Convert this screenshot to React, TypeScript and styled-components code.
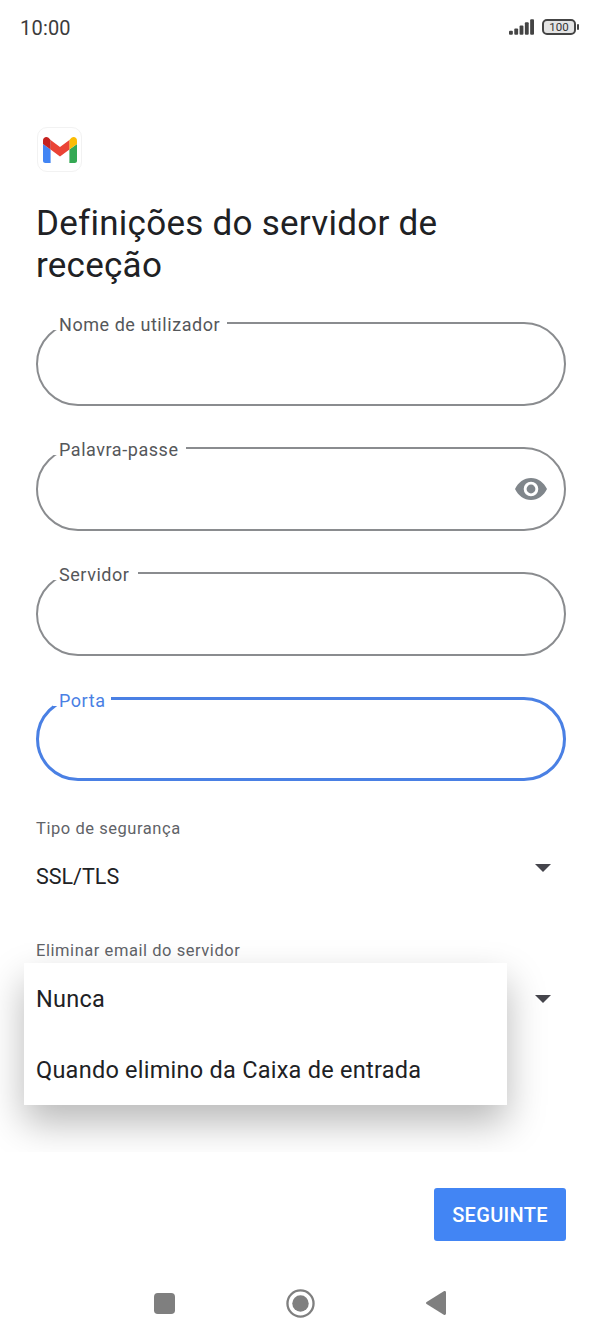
import React from "react";
import styled, {createGlobalStyle} from "styled-components";

const GlobalStyle = createGlobalStyle`
	html, body {
		margin: 0;
		padding: 0;
		background: #fff;
		font-family: Roboto, "Liberation Sans", sans-serif;
	}
	* {
		box-sizing: border-box;
	}
`;

const FIELDS = [
	{label: "Nome de utilizador", notch: 174},
	{label: "Palavra-passe", notch: 133, eye: true},
	{label: "Servidor", notch: 85},
	{label: "Porta", notch: 58, active: true},
];

const GmailLogo = () => (
	<svg width="34" height="26" viewBox="0 0 34 26">
		<path d="M2.3 26H7.6V12.6L0 7V23.700C0 25 1 26 2.300 26Z" fill="#4285f4" />
		<path d="M26.400 26H31.700C33 26 34 25 34 23.700V7L26.400 12.600Z" fill="#34a853" />
		<path d="M26.400 2.900V12.600L34 7V3.400C34 .6 30.800 -1 28.500 .8Z" fill="#fbbc04" />
		<path d="M7.600 12.600V2.900L17 9.900L26.400 2.900V12.600L17 19.600Z" fill="#ea4335" />
		<path d="M0 3.400V7L7.600 12.600V2.900L5.500 .8C3.200 -1 0 .6 0 3.400Z" fill="#c5221f" />
	</svg>
);

const EyeIcon = () => (
	<svg width="32" height="22" viewBox="0 0 32 22">
		<path
			fillRule="evenodd"
			d="M16 0C9 0 3.100 4.500 0 11C3.100 17.500 9 22 16 22C23 22 28.900 17.500 32 11C28.900 4.500 23 0 16 0ZM16 18.300A7.300 7.300 0 1 1 16 3.700A7.300 7.300 0 0 1 16 18.300Z"
			fill="#80868b"
		/>
		<circle cx="16" cy="11" r="4.400" fill="#80868b" />
	</svg>
);

const Caret = () => (
	<svg width="16" height="8" viewBox="0 0 16 8">
		<path d="M0 0H16L8 8Z" fill="#45454c" />
	</svg>
);

export default function App() {
	return (
		<Screen>
			<GlobalStyle />
			<StatusBar>
				<Clock>10:00</Clock>
				<StatusIcons>
					<svg width="25" height="16" viewBox="0 0 26 16">
						<rect x="0" y="12" width="4" height="4" rx="1" fill="#444" />
						<rect x="5.500" y="9.500" width="4" height="6.500" rx="1" fill="#444" />
						<rect x="11" y="6.500" width="4" height="9.500" rx="1" fill="#444" />
						<rect x="16.500" y="3" width="4" height="13" rx="1" fill="#444" />
						<rect x="22" y="0" width="4" height="16" rx="1" fill="#444" />
					</svg>
					<Battery>
						<BatteryBody>100</BatteryBody>
						<BatteryTip />
					</Battery>
				</StatusIcons>
			</StatusBar>

			<Content>
				<LogoBox>
					<GmailLogo />
				</LogoBox>
				<Title>Definições do servidor de receção</Title>

				<FieldList>
					{FIELDS.map((field) => (
						<Field key={field.label} $active={field.active}>
							<FieldLabel $active={field.active} $notch={field.notch}>{field.label}</FieldLabel>
							{field.eye && <EyeIcon />}
						</Field>
					))}
				</FieldList>

				<SelectRow>
					<SelectLabel>Tipo de segurança</SelectLabel>
					<SelectValue>
						SSL/TLS
						<CaretSlot><Caret /></CaretSlot>
					</SelectValue>
				</SelectRow>

				<SecondSelect>
					<SelectLabel>Eliminar email do servidor</SelectLabel>
					<CaretLine><CaretSlot><Caret /></CaretSlot></CaretLine>
					<Menu>
						<MenuItem>Nunca</MenuItem>
						<MenuItem>Quando elimino da Caixa de entrada</MenuItem>
					</Menu>
				</SecondSelect>
			</Content>

			<Footer>
				<NextButton>SEGUINTE</NextButton>
			</Footer>

			<NavBar>
				<svg width="21" height="21" viewBox="0 0 22 22">
					<rect width="22" height="22" rx="4" fill="#7f7f7f" />
				</svg>
				<svg width="29" height="29" viewBox="0 0 30 30">
					<circle cx="15" cy="15" r="13.500" fill="none" stroke="#7f7f7f" strokeWidth="2.400" />
					<circle cx="15" cy="15" r="8.500" fill="#7f7f7f" />
				</svg>
				<svg width="20" height="24" viewBox="0 0 20 24">
					<path d="M20 1.500V22.500C20 23.800 18.800 24.300 17.800 23.700L.6 13C-.2 12.500 -.2 11.500 .6 11L17.800 .3C18.800 -.3 20 .2 20 1.500Z" fill="#7f7f7f" />
				</svg>
			</NavBar>
		</Screen>
	);
}

const Screen = styled.div`
	width: 602px;
	height: 1338px;
	background: #fff;
	overflow: hidden;
	display: flex;
	flex-direction: column;
`;

const StatusBar = styled.div`
	height: 56px;
	padding: 0 23px 0 20px;
	display: flex;
	align-items: center;
	justify-content: space-between;
`;

const Clock = styled.span`
	font-size: 20px;
	color: #3c3c3c;
	letter-spacing: 0.2px;
`;

const StatusIcons = styled.div`
	display: flex;
	align-items: center;
	gap: 8px;
	margin-bottom: 2px;
`;

const Battery = styled.div`
	display: flex;
	align-items: center;
	gap: 1px;
`;

const BatteryBody = styled.div`
	width: 34px;
	height: 16px;
	border: 2px solid #444;
	border-radius: 5px;
	background: #e4e4e4;
	background-clip: padding-box;
	font-size: 11.500px;
	line-height: 12px;
	text-align: center;
	color: #333;
`;

const BatteryTip = styled.div`
	width: 2px;
	height: 6px;
	border-radius: 1px;
	background: #444;
`;

const Content = styled.div`
	padding: 71px 36px 0;
	display: flex;
	flex-direction: column;
	height: 1096px;
	flex: none;
`;

const LogoBox = styled.div`
	width: 45px;
	height: 45px;
	margin-left: 1px;
	border: 1px solid #f2f2f2;
	border-radius: 10px;
	display: flex;
	align-items: center;
	justify-content: center;
`;

const Title = styled.h1`
	margin: 31px 0 0;
	width: 480px;
	font-size: 35px;
	line-height: 42px;
	font-weight: 400;
	letter-spacing: 0.26px;
	color: #202124;
`;

const FieldList = styled.div`
	margin-top: 35px;
	display: flex;
	flex-direction: column;
	gap: 41px;
`;

const Field = styled.div<{$active?: boolean}>`
	position: relative;
	width: 530px;
	height: 84px;
	border: ${({$active}) => ($active ? "3px solid #4a80e4" : "2px solid #8a8c8f")};
	border-radius: 42px;
	display: flex;
	align-items: center;
	justify-content: flex-end;
	padding-right: 17px;
`;

const FieldLabel = styled.label<{$active?: boolean; $notch: number}>`
	position: absolute;
	top: -9px;
	left: ${({$active}) => ($active ? "14px" : "15px")};
	width: ${({$notch}) => $notch}px;
	height: 15px;
	padding-left: 6px;
	background: #fff;
	font-size: 18px;
	line-height: 20px;
	letter-spacing: 0.55px;
	white-space: nowrap;
	color: ${({$active}) => ($active ? "#4a80e4" : "#55575a")};
`;

const SelectRow = styled.div`
	margin-top: 38px;
	display: flex;
	flex-direction: column;
`;

const SecondSelect = styled.div`
	position: relative;
	margin-top: 49px;
	display: flex;
	flex-direction: column;
`;

const SelectLabel = styled.div`
	font-size: 16.500px;
	line-height: 20px;
	letter-spacing: 0.55px;
	color: #5f6368;
`;

const SelectValue = styled.div`
	margin-top: 23px;
	height: 30px;
	font-size: 21.500px;
	line-height: 30px;
	color: #202124;
	display: flex;
	align-items: center;
	justify-content: space-between;
`;

const CaretLine = styled.div`
	margin-top: 34px;
	display: flex;
	justify-content: flex-end;
`;

const CaretSlot = styled.div`
	display: flex;
	margin: 0 15px 18px 0;
`;

const Menu = styled.div`
	position: absolute;
	top: 22px;
	left: -12px;
	width: 483px;
	height: 142px;
	padding-top: 21px;
	background: #fff;
	box-shadow: 0 18px 36px rgba(0, 0, 0, 0.28);
	display: flex;
	flex-direction: column;
`;

const MenuItem = styled.div`
	height: 71px;
	flex: none;
	padding-left: 12px;
	font-size: 23.500px;
	line-height: 30px;
	letter-spacing: 0.25px;
	color: #202124;
`;

const Footer = styled.div`
	position: relative;
	height: 126px;
	padding: 36px 36px 0 0;
	background: #fff;
	flex: none;
	display: flex;
	justify-content: flex-end;
	align-items: flex-start;
`;

const NextButton = styled.button`
	width: 132px;
	height: 53px;
	border: 0;
	border-radius: 3px;
	background: #4285f4;
	color: #fff;
	font-family: inherit;
	font-size: 20px;
	font-weight: 500;
	letter-spacing: 0.3px;
`;

const NavBar = styled.div`
	padding: 0 156px 0 154px;
	height: 50px;
	flex: none;
	display: flex;
	align-items: center;
	justify-content: space-between;
`;
